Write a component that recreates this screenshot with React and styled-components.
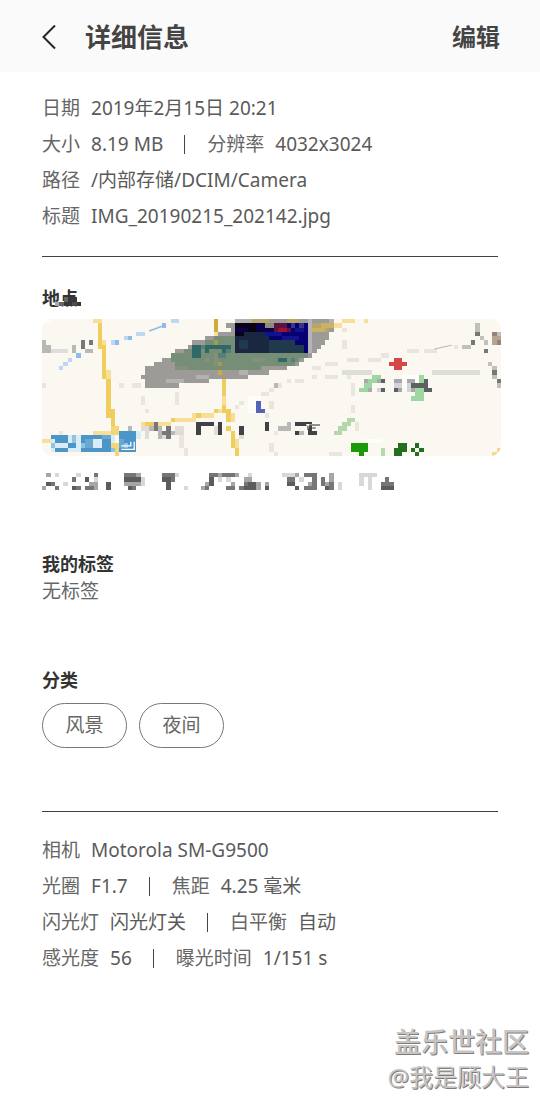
import React from "react"
import styled, { createGlobalStyle } from "styled-components"

const GlobalStyle = createGlobalStyle`
  * {
    box-sizing: border-box;
  }
  body {
    margin: 0;
    background: #fff;
    color: #5a5a5a;
    font-family: "Noto Sans", "Noto Sans CJK SC", sans-serif;
    font-size: 19px;
  }
`

const Page = styled.div`
  display: flex;
  flex-direction: column;
  min-height: 100vh;
`

const Header = styled.header`
  display: flex;
  align-items: center;
  height: 72px;
  padding: 1px 40px 0 42px;
  background: #fafafa;
`

const HeaderButton = styled.button`
  display: flex;
  padding: 0;
  border: none;
  background: none;
  color: #444;
  font: inherit;
  font-size: 24px;
  font-weight: 700;
  line-height: 36px;
  cursor: pointer;
`

const Title = styled.h1`
  flex: 1;
  margin: 0 0 0 27px;
  color: #444;
  font-size: 26px;
  font-weight: 700;
  line-height: 36px;
`

const Content = styled.main`
  padding: 18px 39px 0 42px;
`

const Details = styled.dl`
  margin: 0;
`

const Row = styled.div`
  display: flex;
  align-items: center;
  line-height: 36px;
  white-space: nowrap;
`

const Pair = styled.div`
  display: flex;
  gap: 11px;

  & + &::before {
    content: "";
    align-self: center;
    width: 1px;
    height: 19px;
    margin: 0 11px 0 21px;
    background: #444;
  }
`

const Label = styled.dt`
  color: #666;
`

const Value = styled.dd`
  margin: 0;
`

const Divider = styled.hr`
  height: 1px;
  margin: 0 3px 0 0;
  border: none;
  background: #444;
`

const Section = styled.section`
  margin-top: ${(props) => props.$top}px;
`

const Heading = styled.h2`
  position: relative;
  width: fit-content;
  margin: 0;
  color: #333;
  font-size: 18px;
  font-weight: 700;
  line-height: 27px;
`

const HeadingPatch = styled.svg`
  position: absolute;
  left: 13px;
  bottom: 6px;
  width: 26px;
  height: 9px;
`

const Note = styled.p`
  margin: 0;
  color: #666;
  line-height: 27px;
`

const Map = styled.svg`
  display: block;
  width: 100%;
  margin-top: 7px;
  border-radius: 10px;
  background: #fbf8f2;
`

const Address = styled.svg`
  display: block;
  width: 100%;
  margin-top: 17px;
`

const Chips = styled.div`
  display: flex;
  gap: 12px;
  margin-top: 9px;
`

const Chip = styled.button`
  width: 85px;
  height: 45px;
  padding: 0 0 4px;
  border: 1px solid #777;
  border-radius: 23px;
  background: #fff;
  color: #666;
  font: inherit;
  cursor: pointer;
`

const Watermark = styled.footer`
  margin-top: auto;
  padding: 0 11px 16px 0;
  color: #c8c4c2;
  text-align: right;
  text-shadow: 1px 1px 0 #7c7c7c;
`

const Community = styled.div`
  font-size: 27px;
  font-weight: 500;
  line-height: 36px;
`

const Author = styled.div`
  font-size: 24px;
  line-height: 34px;
`

// every layer is a colour and a list of "x y width height" blocks
const mapLayers = [
  ["#fffdf9", "0 0 2 1,84 13 4 3,48 18 2 4,75 28 4 1,50 18 1 1"],
  ["#e9e6e0", "71 9 3 1,76 9 3 1,79 8 2 1,85 7 3 1,89 7 3 1,96 6 1 1,66 10 3 1,63 11 2 1,66 13 3 1,63 13 1 1,59 14 2 1,70 5 1 2,70 2 1 1,71 13 1 1,72 15 1 3,72 20 1 2,73 24 1 2,18 15 1 1,21 15 2 1,26 15 2 1,31 17 1 3,23 18 1 2,24 21 1 1,46 19 1 1,45 20 1 1,51 17 2 1,53 16 1 1,55 15 1 1,57 14 1 1,53 19 1 2,52 22 1 1,54 26 1 1,53 29 1 2,54 31 1 1,67 31 3 1,32 27 1 3,33 30 1 2,4 26 1 1,0 15 1 1"],
  ["#dfddd9", "70 12 7 1,91 12 11 1,2 7 4 1,23 25 2 1,24 26 1 2,31 25 2 2,28 27 1 1,40 25 1 2,46 27 1 1"],
  ["#b9b8b6", "0 5 1 1,0 6 2 2,7 6 1 2,10 7 2 1,25 25 1 1,27 25 1 3,30 26 1 1,20 25 1 1,55 25 3 1,57 24 1 2,60 26 1 1,54 15 1 1"],
  ["#f7df99", "12 0 2 1,13 3 1 1,14 5 1 2,15 12 1 3,12 26 4 1,0 28 2 1,23 24 7 1,30 23 6 1,35 22 5 1,40 21 4 1,40 0 1 8,42 17 1 4,44 22 1 2,67 1 3 1,70 0 3 1,75 0 1 1,17 27 1 3,45 28 1 2"],
  ["#f1cd5d", "13 1 1 6,14 6 1 8,15 14 1 7,15 21 2 2,16 22 1 4,16 25 2 1,17 30 1 2,41 11 1 2,42 12 1 6,42 20 1 2,43 21 1 3,43 25 1 1,44 26 1 3,44 28 1 2,45 30 1 2,24 24 2 1,30 23 1 1,36 22 1 1,40 21 1 1"],
  ["#bdd8f0", "4 11 1 1,5 10 1 1,6 9 1 1,8 8 1 1,16 5 2 1,19 4 2 1,22 3 2 1,30 0 2 1"],
  ["#8fbbec", "8 8 1 1,17 5 1 1,20 4 1 1,28 1 1 1"],
  ["#9c9b98", "45 0 23 1,43 1 25 1,44 2 24 1,41 3 26 1,38 4 29 1,35 5 31 1,34 6 31 1,31 7 33 1,30 8 33 1,28 9 33 1,26 10 34 1,24 11 33 1,24 12 29 1,23 13 25 1,24 14 15 1,24 15 8 1"],
  ["#b4b2af", "45 0 4 1,29 14 4 1,44 11 3 1,36 13 3 1,46 12 2 1,67 0 1 2"],
  ["#768e75", "40 4 22 1,38 5 24 1,35 6 27 1,33 7 29 1,30 8 32 1,30 9 30 1,31 10 28 1,31 11 20 1"],
  ["#84907c", "40 8 1 3,38 9 1 1,49 9 3 1,31 11 3 1"],
  ["#2f6967", "35 6 4 1,39 6 5 1,35 7 2 2,38 6 1 2,42 7 1 2,55 9 2 1"],
  ["#54807a", "37 6 1 1,41 8 2 1,43 7 1 1,58 9 1 1"],
  ["#a39b52", "40 5 1 1,41 10 1 1"],
  ["#d0aa3c", "40 0 1 3,41 12 1 1"],
  ["#b5a866", "63 1 4 2,49 0 4 1,57 0 3 1"],
  ["#c9b265", "63 2 3 1,65 1 3 1"],
  ["#090315", "45 1 9 7"],
  ["#060073", "53 1 9 7"],
  ["#0b014b", "50 1 4 3,53 5 2 3,45 2 3 1"],
  ["#1a2740", "45 4 8 4,47 3 5 1"],
  ["#21394c", "46 5 2 2,53 5 6 1,53 6 8 2"],
  ["#11128e", "52 3 4 1,56 4 4 1,59 2 2 1"],
  ["#8e8b76", "52 1 2 1"],
  ["#5a1440", "54 1 3 1,54 2 4 1"],
  ["#a50e34", "55 2 2 1"],
  ["#39367e", "58 1 1 1,60 1 1 1"],
  ["#b5b4b9", "62 0 1 8"],
  ["#5562b8", "50 19 1 3,50 21 2 1"],
  ["#d94648", "82 9 2 3,81 10 4 1"],
  ["#9fd7a2", "77 13 2 1,76 14 3 1,75 15 2 1,74 16 2 1,88 13 1 5,87 16 2 2,86 18 3 1,88 14 2 1"],
  ["#b2d8ab", "71 23 2 1,70 24 2 1,69 25 2 1,68 26 2 1,79 30 1 2"],
  ["#a9a9ad", "75 14 1 1,78 14 1 1,82 14 2 1,82 16 2 1,85 14 2 1,86 16 1 1,76 16 1 1"],
  ["#d2d4d7", "82 15 2 1,85 15 1 2,78 16 1 1"],
  ["#5c625f", "79 14 1 1,79 16 1 1,86 15 3 1,89 14 1 3,90 16 1 1,82 16 1 1"],
  ["#1c9a08", "72 29 4 2,74 31 1 1"],
  ["#246e20", "83 29 2 1,82 30 3 1,82 31 2 1,87 29 1 1,86 30 1 1,88 30 1 1,87 31 1 1"],
  ["#414245", "36 24 4 1,36 24 1 3,41 24 1 3,46 25 1 2,52 24 1 2,59 24 4 1,59 26 1 1,62 26 2 1,62 25 1 1"],
  ["#777", "9 5 1 2,11 5 1 1,26 24 1 2,29 25 1 3,28 26 1 1,101 3 1 1,100 5 1 1,103 7 1 1,105 12 1 1,106 14 1 1"],
  ["#c3bfb9", "101 1 1 2,102 4 1 1,99 6 1 1,98 6 1 1,103 5 1 1,104 10 1 1,105 11 1 1,105 13 1 1,106 15 1 1,106 3 1 1"],
  ["#b5a494", "105 4 2 1,105 5 1 1"],
  ["#958373", "106 5 1 1,105 3 1 1"],
  ["#f5d78f", "106 30 1 1,105 31 1 1"],
  ["#8fc3e4", "2 27 20 4,18 26 4 1,9 27 2 4"],
  ["#4c95c8", "2 27 4 1,3 28 3 1,3 30 3 1,6 29 2 1,9 27 3 2,9 30 7 1,12 27 2 1,14 28 2 3,18 26 4 3,20 27 2 4,18 30 4 1"],
  ["#6aa8d4", "10 28 2 2,12 28 1 1,14 27 2 1,18 28 1 2"],
  ["#dcecf6", "2 28 1 1,2 30 1 1,6 27 1 2,6 30 3 1,8 27 1 4,12 28 2 2,16 27 1 2,3 29 3 1,22 26 1 2"],
  ["#fbf8f2", "17 26 1 4"],
  ["#f4d67a", "16 25 2 2,17 29 1 3,16 29 1 1"],
]

const addressLayers = [
  ["#d8d8d8", "3 0 1 1,5 2 1 1,8 0 1 1,12 1 1 1,23 1 1 2,31 0 1 1,33 3 1 1,41 1 1 1,43 1 1 1,48 0 1 1,56 0 3 1,60 1 1 1,69 2 1 2,74 0 1 3,75 0 3 1,76 1 1 3"],
  ["#a6a6a6", "1 0 1 1,0 3 1 1,11 2 2 1,12 3 1 1,22 0 1 1,20 2 3 1,19 2 1 1,37 3 1 1,38 2 1 1,41 0 1 1,45 0 1 1,44 2 1 1,47 1 2 1,50 2 1 2,52 2 1 1,59 0 1 1,62 2 1 1,67 0 1 2,66 2 1 1,67 3 1 1"],
  ["#767676", "2 2 1 1,3 3 1 1,7 1 1 1,8 3 1 1,10 3 2 1,12 0 1 1,19 0 3 1,21 3 1 1,28 0 3 1,30 1 1 1,39 0 2 1,38 3 1 1,42 0 3 1,43 3 2 1,46 3 1 1,47 2 1 1,57 1 2 1,61 0 2 1,61 3 2 1,63 0 1 4,65 1 1 2,67 2 1 2,80 1 1 1,79 2 3 1"],
  ["#5c5c5c", "1 2 1 1,7 3 1 1,10 1 1 1,15 2 1 2,19 1 4 1,20 3 1 1,29 1 1 3,28 1 1 1,39 1 1 2,47 3 3 1,48 2 2 1,52 3 1 1,58 2 1 1,57 2 1 1,59 3 1 1,66 3 1 1,79 3 3 1"],
]

const patchLayers = [
  ["#aaa", "0 1 2 1"],
  ["#666", "2 0 1 1,1 1 1 1"],
  ["#383838", "3 0 2 1,2 1 2 1,5 1 1 1"],
  ["#4d4d4d", "4 1 1 1"],
]

const toPath = (blocks) =>
  blocks
    .split(",")
    .map((block) => {
      const [x, y, w, h] = block.split(" ")
      return `M${x} ${y}h${w}v${h}h-${w}z`
    })
    .join("")

const Mosaic = ({ layers }) => (
  <g shapeRendering="crispEdges">
    {layers.map(([fill, blocks], index) => (
      <path key={index} fill={fill} d={toPath(blocks)} />
    ))}
  </g>
)

const DetailRow = ({ items }) => (
  <Row>
    {items.map(([label, value]) => (
      <Pair key={label}>
        <Label>{label}</Label>
        <Value>{value}</Value>
      </Pair>
    ))}
  </Row>
)

const fileRows = [
  [["日期", "2019年2月15日 20:21"]],
  [["大小", "8.19 MB"], ["分辨率", "4032x3024"]],
  [["路径", "/内部存储/DCIM/Camera"]],
  [["标题", "IMG_20190215_202142.jpg"]],
]

const cameraRows = [
  [["相机", "Motorola SM-G9500"]],
  [["光圈", "F1.7"], ["焦距", "4.25 毫米"]],
  [["闪光灯", "闪光灯关"], ["白平衡", "自动"]],
  [["感光度", "56"], ["曝光时间", "1/151 s"]],
]

const App = () => {
  return (
    <Page>
      <GlobalStyle />
      <Header>
        <HeaderButton aria-label="返回">
          <svg width="16" height="26" viewBox="0 0 16 26" fill="none" stroke="#252525" strokeWidth="2">
            <path d="M13 1.5 1.5 13 13 24.5" />
          </svg>
        </HeaderButton>
        <Title>详细信息</Title>
        <HeaderButton>编辑</HeaderButton>
      </Header>

      <Content>
        <Details>
          {fileRows.map((items) => <DetailRow key={items[0][0]} items={items} />)}
        </Details>
        <Section $top={22}>
          <Divider />
        </Section>

        <Section $top={28}>
          <Heading>
            地点
            <HeadingPatch viewBox="0 0 6 2" preserveAspectRatio="none">
              <Mosaic layers={patchLayers} />
            </HeadingPatch>
          </Heading>
          <Map viewBox="0 0 107 32">
            <Mosaic layers={mapLayers} />
            <path d="M25 2.8 28 1.7" stroke="#8fbbec" strokeWidth=".4" />
            <path d="m91.5 7 4-.9" stroke="#aaa" strokeWidth=".2" />
            <path d="M18.5 29.6h2.2v-1M18.5 30.4h3v-1.8" fill="none" stroke="#fff" strokeWidth=".3" />
            <path d="M61.6 24.6h3.1M62 25.6v-1M63 25.3h1" fill="none" stroke="#fff" strokeWidth=".5" />
            <path d="M61.5 24.3h1.4M62.3 24.7h2.5M62 25.8v-.9M63 25.4h.8" fill="none" stroke="#222" strokeWidth=".25" />
          </Map>
          <Address viewBox="0 0 107 4">
            <Mosaic layers={addressLayers} />
          </Address>
        </Section>

        <Section $top={61}>
          <Heading>我的标签</Heading>
          <Note>无标签</Note>
        </Section>

        <Section $top={62}>
          <Heading>分类</Heading>
          <Chips>
            <Chip>风景</Chip>
            <Chip>夜间</Chip>
          </Chips>
        </Section>

        <Section $top={63}>
          <Divider />
        </Section>
        <Section $top={20}>
          <Details>
            {cameraRows.map((items) => <DetailRow key={items[0][0]} items={items} />)}
          </Details>
        </Section>
      </Content>

      <Watermark>
        <Community>盖乐世社区</Community>
        <Author>@我是顾大王</Author>
      </Watermark>
    </Page>
  )
}

export default App
